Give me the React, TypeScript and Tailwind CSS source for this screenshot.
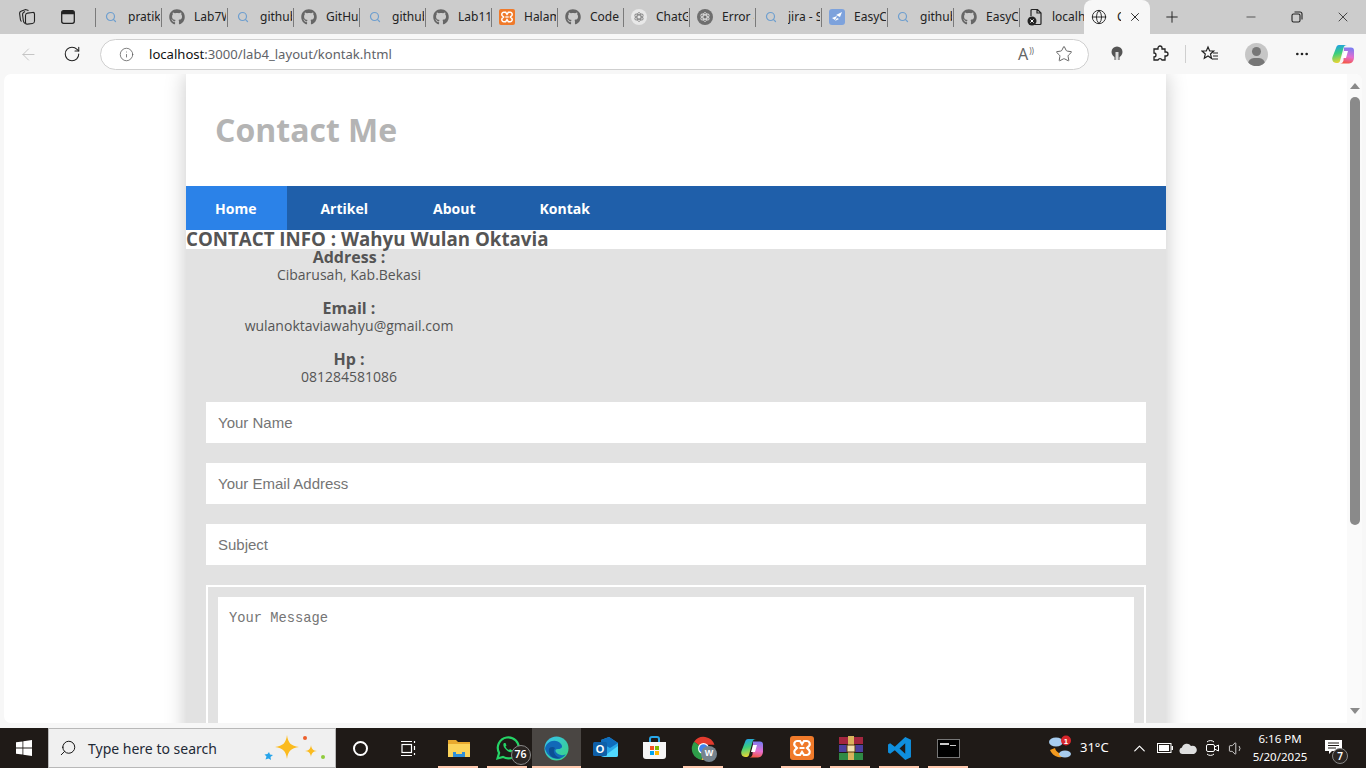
import { Fragment } from "react";
import { FaGithub } from "react-icons/fa";
import {
  ArrowLeft,
  ChevronUp,
  Ellipsis,
  Globe,
  Info,
  Minus,
  Plus,
  RotateCw,
  Search,
  Star,
  Volume1,
  X,
} from "lucide-react";

type TabKind = "search" | "github" | "xampp" | "gptLight" | "gptDark" | "easy" | "file";

const tabs: { kind: TabKind; label: string }[] = [
  { kind: "search", label: "pratikum" },
  { kind: "github", label: "Lab7Web" },
  { kind: "search", label: "github" },
  { kind: "github", label: "GitHub" },
  { kind: "search", label: "github" },
  { kind: "github", label: "Lab11" },
  { kind: "xampp", label: "Halaman" },
  { kind: "github", label: "Code s" },
  { kind: "gptLight", label: "ChatGPT" },
  { kind: "gptDark", label: "Error 4" },
  { kind: "search", label: "jira - S" },
  { kind: "easy", label: "EasyCa" },
  { kind: "search", label: "github" },
  { kind: "github", label: "EasyCa" },
  { kind: "file", label: "localhost" },
];

function XamppIcon({ size = 16 }: { size?: number }) {
  return (
    <svg width={size} height={size} viewBox="0 0 24 24">
      <rect width="24" height="24" rx="3" fill="#f07a2a" />
      <path
        d="M7 5h3l2 3 2-3h3a3 3 0 0 1 2 5l-2 2 2 2a3 3 0 0 1-2 5h-3l-2-3-2 3H7a3 3 0 0 1-2-5l2-2-2-2a3 3 0 0 1 2-5z"
        fill="none"
        stroke="#fff"
        strokeWidth="2.2"
      />
      <path d="M9.5 12h5" stroke="#fff" strokeWidth="2" />
    </svg>
  );
}

function GptIcon({ dark }: { dark: boolean }) {
  return (
    <svg width="16" height="16" viewBox="0 0 16 16">
      <circle cx="8" cy="8" r="8" fill={dark ? "#6e6e6e" : "#e8e8e8"} />
      <g fill="none" stroke={dark ? "#d8d8d8" : "#8a8a8a"} strokeWidth="0.9">
        <ellipse cx="8" cy="8" rx="2" ry="4.6" />
        <ellipse cx="8" cy="8" rx="2" ry="4.6" transform="rotate(60 8 8)" />
        <ellipse cx="8" cy="8" rx="2" ry="4.6" transform="rotate(120 8 8)" />
      </g>
    </svg>
  );
}

function CopilotIcon({ id }: { id: string }) {
  return (
    <svg width="23" height="23" viewBox="0 0 23 23">
      <defs>
        <linearGradient id={`${id}A`} x1="0.3" y1="0" x2="0.5" y2="1">
          <stop offset="0" stopColor="#1f9fe8" />
          <stop offset="0.45" stopColor="#3ccf7c" />
          <stop offset="1" stopColor="#f7d62e" />
        </linearGradient>
        <linearGradient id={`${id}B`} x1="0.6" y1="0" x2="0.4" y2="1">
          <stop offset="0" stopColor="#7b7cf2" />
          <stop offset="0.55" stopColor="#e56fd0" />
          <stop offset="1" stopColor="#f4553f" />
        </linearGradient>
      </defs>
      <path d="M7 2h8c-2 0-3 1-3.500 3L8 18c-.500 1.500-1.500 2-3 2H4c-3 0-4.500-3-3.500-6L4 5c.500-2 1.500-3 3-3z" fill={`url(#${id}A)`} />
      <path d="M12 4.500h7c2 0 3 1 3 3v7c0 3-2 6-5 6H8c2 0 3-1 3.500-3z" fill={`url(#${id}B)`} />
      <path d="M12 8h4l-2 7h-4z" fill="#fff" />
    </svg>
  );
}

function TabIcon({ kind }: { kind: TabKind }) {
  if (kind === "search") return <Search size={12} strokeWidth={2.4} className="text-[#6f9fcf]" />;
  if (kind === "github") return <FaGithub size={16} className="text-[#666666]" />;
  if (kind === "xampp") return <XamppIcon />;
  if (kind === "gptLight") return <GptIcon dark={false} />;
  if (kind === "gptDark") return <GptIcon dark />;
  if (kind === "easy") {
    return (
      <svg width="16" height="16" viewBox="0 0 16 16">
        <rect width="16" height="16" rx="3" fill="#7da2dc" />
        <path d="M3 9l5-2-2 4zM7 6l6-3-2 5-2-1zM6 12l2-3 2 1z" fill="#fff" />
      </svg>
    );
  }
  return (
    <svg width="16" height="18" viewBox="0 0 16 18" fill="none">
      <path d="M5 1.5h5.5L14 5v10.5a1 1 0 0 1-1 1H8M5 1.5a1 1 0 0 0-1 1V8M10 1.5V5h4" stroke="#222" strokeWidth="1.2" />
      <circle cx="5" cy="13" r="4.5" fill="#222" />
      <path d="M3.4 11.4l3.2 3.2M6.6 11.4l-3.2 3.2" stroke="#fff" strokeWidth="1" />
    </svg>
  );
}

function TabStrip() {
  return (
    <div className="flex h-[34px] shrink-0 bg-[#cccccc]">
      <div className="flex w-[95px] shrink-0 items-center pl-[18px]">
        <svg width="18" height="18" viewBox="0 0 18 18" fill="none" stroke="#222" strokeWidth="1.1">
          <rect x="7.500" y="4.500" width="9" height="11" rx="2" transform="skewY(-8) translate(0 2)" />
          <path d="M7 3.500L5.500 4.500C4.700 5 4.500 6 4.600 7l.8 6c.1 1 .8 2 2.100 2.800" />
          <path d="M10.500 2.500L7.500 1.500 3 3.200C2 3.600 1.500 4.500 1.600 5.500l.8 6c.1.8.5 1.500 1.100 2" />
        </svg>
        <svg className="ml-[24px]" width="16" height="16" viewBox="0 0 16 16" fill="none">
          <rect x="1.700" y="1.700" width="12.600" height="12.600" rx="2" stroke="#222" strokeWidth="1.300" />
          <path d="M1.700 3.700a2 2 0 0 1 2-2h8.600a2 2 0 0 1 2 2v1.600H1.700z" fill="#222" />
        </svg>
      </div>
      {tabs.map((tab, i) => (
        <div key={i} className="relative flex h-full w-[66px] shrink-0 items-center">
          <span className="absolute left-0 top-[8px] h-[19px] w-px bg-[#7a7a7a]" />
          <span className="flex w-[30px] shrink-0 justify-center pl-px">
            <TabIcon kind={tab.kind} />
          </span>
          <span className="ml-[3px] w-[32px] overflow-hidden whitespace-nowrap font-['Noto_Sans',sans-serif] text-[12px] text-[#222222]">
            {tab.label}
          </span>
        </div>
      ))}
      <div className="-ml-px flex h-full w-[66px] shrink-0 items-center rounded-t-[8px] bg-[#f7f7f7] pl-[7px]">
        <Globe size={16} strokeWidth={1.400} className="text-[#222222]" />
        <span className="ml-[10px] w-[4px] overflow-hidden font-['Noto_Sans',sans-serif] text-[12px] text-[#222222]">C</span>
        <X size={14} strokeWidth={1.600} className="ml-[7px] text-[#222222]" />
      </div>
      <div className="flex w-[44px] items-center justify-center">
        <Plus size={18} strokeWidth={1.300} className="text-[#222222]" />
      </div>
      <div className="ml-auto flex h-full items-center text-[#222222]">
        <span className="flex w-[46px] justify-center">
          <Minus size={14} strokeWidth={1.200} />
        </span>
        <span className="flex w-[46px] justify-center">
          <svg width="12" height="12" viewBox="0 0 12 12" fill="none" stroke="#222" strokeWidth="1.100">
            <rect x="1" y="3" width="8" height="8" rx="1.500" />
            <path d="M3.500 1h5.500a2 2 0 0 1 2 2v5.500" />
          </svg>
        </span>
        <span className="flex w-[46px] justify-center">
          <X size={16} strokeWidth={1.200} />
        </span>
      </div>
    </div>
  );
}

function Toolbar() {
  return (
    <div className="flex h-[40px] shrink-0 items-center bg-[#f7f7f7]">
      <span className="flex w-[56px] justify-center">
        <ArrowLeft size={19} strokeWidth={1.100} className="text-[#bdbdbd]" />
      </span>
      <span className="flex w-[32px] justify-center">
        <RotateCw size={18} strokeWidth={1.400} className="text-[#222222]" />
      </span>
      <div className="ml-[12px] flex h-[31px] w-[989px] shrink-0 items-center rounded-full border border-[#cfcfcf] bg-white pl-[18px]">
        <Info size={15} strokeWidth={1.200} className="text-[#555555]" />
        <span className="ml-[15px] pt-px font-['Noto_Sans',sans-serif] text-[13.100px] text-[#5f6368]">
          <span className="text-[#111111]">localhost</span>:3000/lab4_layout/kontak.html
        </span>
        <span className="ml-auto font-['Noto_Sans',sans-serif] text-[16px] leading-none text-[#666666]">
          A
          <span className="ml-px align-super text-[8px]">))</span>
        </span>
        <Star size={18} strokeWidth={1.200} className="ml-[21px] mr-[15px] text-[#555555]" />
      </div>
      <svg className="ml-[21px]" width="14" height="16" viewBox="0 0 14 16">
        <circle cx="7" cy="6" r="5.500" fill="#555" />
        <rect x="4.500" y="10" width="5" height="4" fill="#555" />
        <rect x="5.500" y="6" width="3" height="8" fill="#ddd" />
      </svg>
      <svg className="ml-[27px]" width="18" height="18" viewBox="0 0 18 18" fill="none" stroke="#222" strokeWidth="1.300">
        <path d="M7 3a2 2 0 0 1 4 0v1h3v3h1a2 2 0 0 1 0 4h-1v4h-3a2.200 2.200 0 0 0-4 0H3v-3a2 2 0 0 0 0-4V4h4z" />
      </svg>
      <span className="ml-[16px] h-[18px] w-px bg-[#cfcfcf]" />
      <svg className="ml-[15px]" width="18" height="18" viewBox="0 0 18 18" fill="none" stroke="#222" strokeWidth="1.200">
        <path d="M7 2l1.700 4h4L9.500 9l1 4.300L7 11l-3.700 2.300 1-4.300L1 6h4.300z" />
        <path d="M12 8h5M12 11h5M11 14h6" />
      </svg>
      <span className="relative ml-[26px] h-[23px] w-[23px] overflow-hidden rounded-full bg-[#c6c6c6]">
        <span className="absolute left-[7px] top-[4px] h-[9px] w-[9px] rounded-full bg-[#777777]" />
        <span className="absolute left-[3px] top-[15px] h-[12px] w-[17px] rounded-full bg-[#777777]" />
      </span>
      <Ellipsis size={16} className="ml-[26px] text-[#222222]" />
      <span className="ml-[22px] flex">
        <CopilotIcon id="cpTool" />
      </span>
    </div>
  );
}

function InfoBlock({ label, value }: { label: string; value: string }) {
  return (
    <div className="mb-[15px] text-center">
      <h4 className="text-[16px] font-bold leading-[18px]">{label}</h4>
      <p className="text-[14px] leading-[18px]">{value}</p>
    </div>
  );
}

function Page() {
  return (
    <div className="relative ml-[4px] mr-[4px] h-[649px] shrink-0 overflow-hidden rounded-[7px] bg-white">
      <div className="ml-[182px] h-[800px] w-[980px] bg-white font-['Open_Sans',sans-serif] text-[#555555] shadow-[0_0_20px_rgba(0,0,0,0.22)]">
        <header className="flex h-[112px] items-center pl-[29px]">
          <h1 className="text-[32px] font-bold leading-none text-[#b4b4b4]">Contact Me</h1>
        </header>
        <nav className="flex h-[44px] items-center bg-[#1f5faa] text-[14px] font-bold text-white">
          <a className="flex h-full items-center bg-[#2b82e8] pl-[29px] pr-[31px]">Home</a>
          <div className="flex gap-[64px] pl-[33px]">
            <a className="mr-px">Artikel</a>
            <a>About</a>
            <a>Kontak</a>
          </div>
        </nav>
        <h2 className="relative z-10 h-[19px] whitespace-nowrap text-[18.720px] font-bold leading-[18px]">
          CONTACT INFO : Wahyu Wulan Oktavia
        </h2>
        <section className="flow-root h-[600px] bg-[#e2e2e2] px-[20px]">
          <div className="relative z-10 -ml-[20px] -mt-px w-[326px]">
            <InfoBlock label="Address :" value="Cibarusah, Kab.Bekasi" />
            <InfoBlock label="Email :" value="wulanoktaviawahyu@gmail.com" />
            <InfoBlock label="Hp :" value="081284581086" />
          </div>
          <form className="mt-[16px] flex flex-col gap-[20px] font-['Liberation_Sans',sans-serif] text-[15px]">
            {["Your Name", "Your Email Address", "Subject"].map((placeholder) => (
              <Fragment key={placeholder}>
                <input
                  placeholder={placeholder}
                  className="h-[41px] w-full bg-white px-[12px] text-[15px] placeholder:text-[#757575]"
                />
              </Fragment>
            ))}
            <div className="border-2 border-white p-[10px]">
              <textarea
                placeholder="Your Message"
                className="block h-[300px] w-full resize-none bg-white px-[11px] py-[13px] font-['Liberation_Mono',monospace] text-[13.750px] leading-[18px] placeholder:text-[#757575]"
              />
            </div>
          </form>
        </section>
      </div>
      <div className="absolute bottom-0 right-0 top-0 flex w-[15px] flex-col items-center bg-[#fafafa]">
        <span className="mt-[9px] h-0 w-0 border-x-[5px] border-b-[6px] border-x-transparent border-b-[#8a8a8a]" />
        <span className="mt-[8px] h-[428px] w-[10px] rounded-full bg-[#8a8a8a]" />
        <span className="mt-auto mb-[9px] h-0 w-0 border-x-[5px] border-t-[6px] border-x-transparent border-t-[#8a8a8a]" />
      </div>
    </div>
  );
}

function TaskIcon({ name }: { name: string }) {
  switch (name) {
    case "cortana":
      return <span className="h-[15px] w-[15px] rounded-full border-[2.500px] border-white" />;
    case "taskview":
      return (
        <svg width="17" height="17" viewBox="0 0 17 17" fill="none" stroke="#fff" strokeWidth="1.200">
          <rect x="2" y="4.500" width="9.500" height="8" />
          <path d="M1 1.500h11M1 15.500h11M14.500 1v2M14.500 6v4M14.500 13v2" />
        </svg>
      );
    case "explorer":
      return (
        <svg width="24" height="22" viewBox="0 0 24 22">
          <path d="M1 3h8l2 2h12v15H1z" fill="#e8a92e" />
          <rect x="1" y="7" width="22" height="13" fill="#fbd35a" />
          <rect x="6" y="15" width="12" height="5" fill="#2f8fd8" />
          <rect x="9" y="15" width="6" height="2" fill="#fbd35a" />
        </svg>
      );
    case "whatsapp":
      return (
        <span className="relative flex">
          <svg width="26" height="26" viewBox="0 0 26 26" fill="none">
            <path d="M2.500 23.500l1.600-5.600A10.500 10.500 0 1 1 8 21.900z" stroke="#25d366" strokeWidth="2.200" />
            <path d="M9 8c-1 1-1 3 1 5.500s5 4.500 6.500 3.500l1-1.500-2.500-1.500-1 1c-1.500-.5-3-2-3.500-3.500l1-1L10.500 8z" fill="#25d366" />
          </svg>
          <span className="absolute left-[16px] top-[10px] flex h-[20px] w-[20px] items-center justify-center rounded-full border border-[#888888] bg-[#2b2623] font-['Noto_Sans',sans-serif] text-[10.500px] font-semibold text-white">
            76
          </span>
        </span>
      );
    case "edge":
      return (
        <svg width="25" height="25" viewBox="0 0 25 25">
          <defs>
            <linearGradient id="edgeA" x1="0" y1="0" x2="1" y2="1">
              <stop offset="0" stopColor="#35c1f1" />
              <stop offset="1" stopColor="#3ad37d" />
            </linearGradient>
          </defs>
          <circle cx="12.500" cy="12.500" r="12" fill="url(#edgeA)" />
          <path d="M1 13C2 5 12 2 17 8c2 2.500 1 5-3 5-5 0-2 5 3 6 2 .5 4 0 5-1-4 7-17 7-21-5z" fill="#1268b8" />
          <path d="M11 12c-3 3 0 9 6 10-7 2-13-2-12-9 .5-2 4-3 6-1z" fill="#0c4f95" />
        </svg>
      );
    case "outlook":
      return (
        <svg width="25" height="24" viewBox="0 0 25 24">
          <path d="M8 4l8-3 9 6v12a2 2 0 0 1-2 2H10a2 2 0 0 1-2-2z" fill="#28a8ea" />
          <path d="M8 4l8-3 9 6-8 5-9-5z" fill="#0f6cbd" />
          <path d="M10 21l15-11v9a2 2 0 0 1-2 2z" fill="#50d9ff" />
          <rect x="0" y="6" width="14" height="14" rx="1.500" fill="#0f5fa8" />
          <text x="7" y="17" textAnchor="middle" fontSize="11" fontWeight="700" fill="#fff" fontFamily="Liberation Sans">O</text>
        </svg>
      );
    case "store":
      return (
        <svg width="23" height="24" viewBox="0 0 23 24">
          <path d="M7 6V3a2 2 0 0 1 2-2h5a2 2 0 0 1 2 2v3" fill="none" stroke="#28a8ea" strokeWidth="2" />
          <path d="M0 6h23v14a3 3 0 0 1-3 3H3a3 3 0 0 1-3-3z" fill="#f6f6f6" />
          <rect x="7" y="10" width="4" height="4" fill="#f25022" />
          <rect x="12" y="10" width="4" height="4" fill="#7fba00" />
          <rect x="7" y="15" width="4" height="4" fill="#00a4ef" />
          <rect x="12" y="15" width="4" height="4" fill="#ffb900" />
        </svg>
      );
    case "chrome":
      return (
        <span className="relative flex">
          <svg width="25" height="25" viewBox="0 0 24 24">
            <path d="M12 12L3 5.500A11 11 0 0 1 22.500 8.500H12z" fill="#e33b2e" />
            <path d="M12 12h10.500A11 11 0 0 1 10 23z" fill="#f9c12c" />
            <path d="M12 12l-2 11A11 11 0 0 1 3 5.500z" fill="#2e9e49" />
            <circle cx="12" cy="12" r="5.300" fill="#fff" />
            <circle cx="12" cy="12" r="4.200" fill="#3f83ee" />
          </svg>
          <span className="absolute left-[10px] top-[10px] flex h-[16px] w-[16px] items-center justify-center rounded-full bg-[#77848e] font-['Liberation_Sans',sans-serif] text-[9px] font-bold text-white">
            W
          </span>
        </span>
      );
    case "copilot":
      return <CopilotIcon id="cpTask" />;
    case "xampp":
      return <XamppIcon size={24} />;
    case "winrar":
      return (
        <svg width="24" height="24" viewBox="0 0 24 24">
          <rect x="0" y="1" width="24" height="7" fill="#a3263f" />
          <rect x="0" y="9" width="24" height="7" fill="#4c3f9f" />
          <rect x="0" y="17" width="24" height="7" fill="#2f8a45" />
          <rect x="9" y="0" width="6" height="24" fill="#d9b35c" />
          <rect x="8" y="9" width="8" height="7" fill="#f2e2b0" stroke="#5a3a12" />
        </svg>
      );
    case "vscode":
      return (
        <svg width="25" height="25" viewBox="0 0 24 24">
          <path d="M17.500 1L23 3.700v16.600L17.500 23l-10-9.300L3 17l-2-1.200V8.200L3 7l4.500 3.300zM17.500 7l-5.500 5 5.500 5z" fill="#0f8fde" fillRule="evenodd" />
        </svg>
      );
    default:
      return (
        <span className="flex h-[19px] w-[23px] flex-col gap-[2px] border border-[#777777] bg-black px-[2px] pt-[3px]">
          <span className="h-[2px] w-[9px] bg-[#cccccc]" />
          <span className="ml-[10px] -mt-[2px] h-px w-[6px] bg-[#cccccc]" />
        </span>
      );
  }
}

const taskbarApps = [
  { name: "explorer", open: true },
  { name: "whatsapp", open: true },
  { name: "edge", open: true, active: true },
  { name: "outlook", open: false },
  { name: "store", open: false },
  { name: "chrome", open: true },
  { name: "copilot", open: false },
  { name: "xampp", open: true },
  { name: "winrar", open: true },
  { name: "vscode", open: true },
  { name: "cmd", open: true },
];

function Taskbar() {
  return (
    <div className="flex h-[40px] shrink-0 bg-[#1f1a17] font-['Noto_Sans',sans-serif] text-white">
      <div className="flex w-[48px] items-center justify-center">
        <svg width="16" height="16" viewBox="0 0 16 16" fill="#fff">
          <path d="M0 2.300l6.500-.9v6.200H0zM7.300 1.300L16 0v7.600H7.300zM0 8.400h6.500v6.200L0 13.700zM7.300 8.400H16V16l-8.700-1.200z" />
        </svg>
      </div>
      <div className="flex w-[288px] items-center border border-[#b8b8b8] bg-[#f0f0f0] pl-[10px] text-[#1f2a36]">
        <Search size={18} strokeWidth={1.300} className="-scale-x-100 text-[#111111]" />
        <span className="ml-[11px] text-[14px]">Type here to search</span>
        <svg className="ml-auto mr-[9px]" width="64" height="30" viewBox="0 0 64 30">
          <path d="M25 2c1 8 4 11 12 12-8 1-11 4-12 12-1-8-4-11-12-12 8-1 11-4 12-12z" fill="#fbbb1f" />
          <path d="M49 12c.5 4 2 5.500 6 6-4 .5-5.500 2-6 6-.5-4-2-5.500-6-6 4-.5 5.500-2 6-6z" fill="#fbbb1f" />
          <path d="M7 19l1 2.500 3 .5-2.500 2 .5 3-2.500-1.500-3 1 1-3-2-2 3-.5z" fill="#27a4ea" />
          <circle cx="43" cy="5" r="2" fill="#ec5f2b" />
          <circle cx="61" cy="24" r="2" fill="#8fcb3c" />
        </svg>
      </div>
      <span className="flex w-[48px] items-center justify-center">
        <TaskIcon name="cortana" />
      </span>
      <span className="mr-[2px] flex w-[48px] items-center justify-center">
        <TaskIcon name="taskview" />
      </span>
      {taskbarApps.map((app) => (
        <span
          key={app.name}
          className={`relative flex w-[49px] items-center justify-center ${app.active ? "bg-[#4a4643]" : ""}`}
        >
          <TaskIcon name={app.name} />
          {app.open && (
            <span
              className={`absolute bottom-0 h-[2px] bg-[#ffc9ae] ${app.active ? "left-0 right-0" : "left-[4px] right-[5px]"}`}
            />
          )}
        </span>
      ))}
      <div className="ml-auto flex items-center">
        <svg width="26" height="26" viewBox="0 0 26 26">
          <path d="M3 15a11 11 0 0 0 18 4c-6 1-12-1-13-6z" fill="#f29a1f" />
          <ellipse cx="9" cy="7" rx="7" ry="4.500" fill="#a8cdf0" />
          <ellipse cx="18" cy="19" rx="6" ry="3.500" fill="#a8cdf0" />
          <circle cx="19" cy="5.500" r="5" fill="#d8262c" />
          <text x="19" y="8.500" textAnchor="middle" fontSize="8" fontWeight="700" fill="#fff" fontFamily="Liberation Sans">1</text>
        </svg>
        <span className="ml-[7px] w-[48px] text-[13px]">31°C</span>
        <ChevronUp size={19} strokeWidth={1.500} className="ml-[2px]" />
        <svg className="ml-[8px]" width="16" height="10" viewBox="0 0 16 10">
          <rect x="0.500" y="0.500" width="13.500" height="9" fill="none" stroke="#fff" />
          <rect x="2" y="2" width="10" height="6" fill="#fff" />
          <rect x="14.500" y="3" width="1.500" height="4" fill="#fff" />
        </svg>
        <svg className="ml-[6px]" width="18" height="11" viewBox="0 0 18 11">
          <path d="M3.500 11a3.300 3.300 0 0 1-.5-6.500A5 5 0 0 1 12 3a4 4 0 0 1 3 8z" fill="#dfdfdf" />
        </svg>
        <svg className="ml-[8px]" width="16" height="18" viewBox="0 0 16 18" fill="none" stroke="#fff" strokeWidth="1">
          <rect x="1.500" y="5.500" width="8" height="7" rx="1.500" />
          <path d="M9.500 8l4-2v6l-4-2zM2 3a5 5 0 0 1 7 0M2 15a5 5 0 0 0 7 0" />
        </svg>
        <Volume1 size={17} strokeWidth={1.100} className="ml-[7px]" />
        <div className="ml-[2px] flex w-[66px] flex-col items-center text-[11.500px] leading-[18px]">
          <span>6:16 PM</span>
          <span className="whitespace-nowrap">5/20/2025</span>
        </div>
        <span className="relative ml-[12px] mr-[19px] flex h-[40px] w-[22px] items-center">
          <svg className="-mt-[2px]" width="17" height="15" viewBox="0 0 17 15" fill="#fff">
            <path d="M0 0h17v11H7l-3 3v-3H0z" />
            <path d="M3 3h11M3 5.500h11M3 8h8" stroke="#1f1a17" strokeWidth="1" />
          </svg>
          <span className="absolute left-[7px] top-[20px] flex h-[16px] w-[16px] items-center justify-center rounded-full border border-[#888888] bg-[#2b2623] text-[10px] font-semibold">
            7
          </span>
        </span>
      </div>
    </div>
  );
}

export default function App() {
  return (
    <div className="flex h-screen w-full flex-col overflow-hidden bg-[#f7f7f7]">
      <TabStrip />
      <Toolbar />
      <Page />
      <div className="h-[5px] shrink-0" />
      <Taskbar />
    </div>
  );
}
